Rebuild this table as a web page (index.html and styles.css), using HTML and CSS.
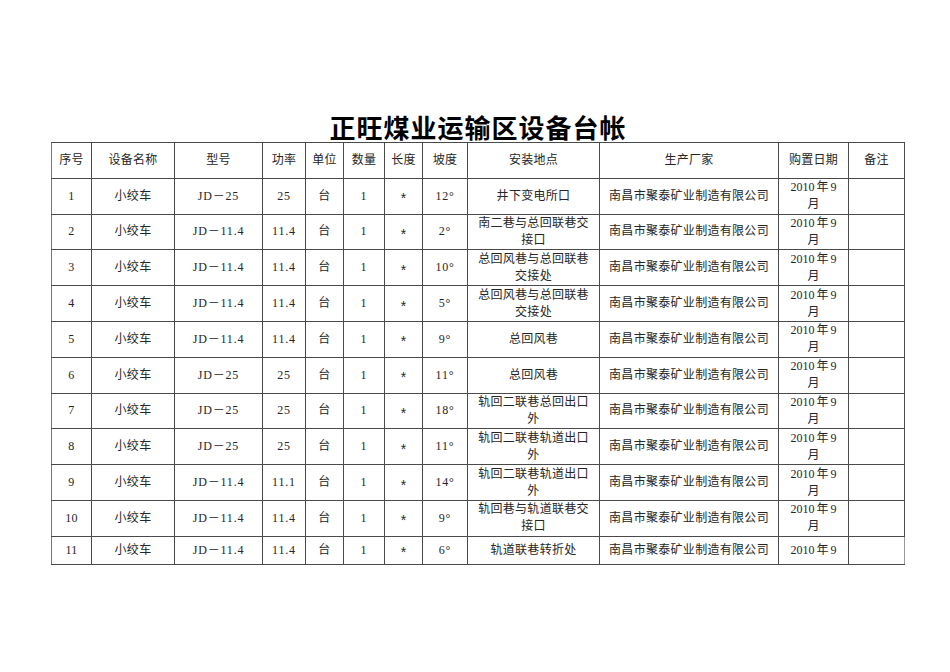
FILE: index.html
```html
<!DOCTYPE html>
<html lang="zh-CN">
<head>
<meta charset="utf-8">
<title>正旺煤业运输区设备台帐</title>
<link rel="stylesheet" href="styles.css">
</head>
<body>
<div class="page">
  <h1 class="title">正旺煤业运输区设备台帐</h1>
  <table class="ledger">
    <colgroup>
      <col class="c-no"><col class="c-name"><col class="c-model"><col class="c-power"><col class="c-unit"><col class="c-qty"><col class="c-len"><col class="c-slope"><col class="c-loc"><col class="c-maker"><col class="c-date"><col class="c-note">
    </colgroup>
    <thead>
      <tr class="row">
        <th>序号</th><th>设备名称</th><th>型号</th><th>功率</th><th class="soft">单位</th><th>数量</th><th>长度</th><th>坡度</th><th>安装地点</th><th>生产厂家</th><th>购置日期</th><th>备注</th>
      </tr>
    </thead>
    <tbody>
      <tr class="row"><td>1</td><td>小绞车</td><td class="lat">JD－25</td><td class="lat">25</td><td class="soft">台</td><td class="lat">1</td><td class="star">*</td><td class="lat">12°</td><td>井下变电所口</td><td>南昌市聚泰矿业制造有限公司</td><td class="date">2010 年 9<br>月</td><td></td></tr>
      <tr class="row"><td>2</td><td>小绞车</td><td class="lat">JD－11.4</td><td class="lat">11.4</td><td class="soft">台</td><td class="lat">1</td><td class="star">*</td><td class="lat">2°</td><td>南二巷与总回联巷交<br>接口</td><td>南昌市聚泰矿业制造有限公司</td><td class="date">2010 年 9<br>月</td><td></td></tr>
      <tr class="row"><td>3</td><td>小绞车</td><td class="lat">JD－11.4</td><td class="lat">11.4</td><td class="soft">台</td><td class="lat">1</td><td class="star">*</td><td class="lat">10°</td><td>总回风巷与总回联巷<br>交接处</td><td>南昌市聚泰矿业制造有限公司</td><td class="date">2010 年 9<br>月</td><td></td></tr>
      <tr class="row"><td>4</td><td>小绞车</td><td class="lat">JD－11.4</td><td class="lat">11.4</td><td class="soft">台</td><td class="lat">1</td><td class="star">*</td><td class="lat">5°</td><td>总回风巷与总回联巷<br>交接处</td><td>南昌市聚泰矿业制造有限公司</td><td class="date">2010 年 9<br>月</td><td></td></tr>
      <tr class="row"><td>5</td><td>小绞车</td><td class="lat">JD－11.4</td><td class="lat">11.4</td><td class="soft">台</td><td class="lat">1</td><td class="star">*</td><td class="lat">9°</td><td>总回风巷</td><td>南昌市聚泰矿业制造有限公司</td><td class="date">2010 年 9<br>月</td><td></td></tr>
      <tr class="row"><td>6</td><td>小绞车</td><td class="lat">JD－25</td><td class="lat">25</td><td class="soft">台</td><td class="lat">1</td><td class="star">*</td><td class="lat">11°</td><td>总回风巷</td><td>南昌市聚泰矿业制造有限公司</td><td class="date">2010 年 9<br>月</td><td></td></tr>
      <tr class="row"><td>7</td><td>小绞车</td><td class="lat">JD－25</td><td class="lat">25</td><td class="soft">台</td><td class="lat">1</td><td class="star">*</td><td class="lat">18°</td><td>轨回二联巷总回出口<br>外</td><td>南昌市聚泰矿业制造有限公司</td><td class="date">2010 年 9<br>月</td><td></td></tr>
      <tr class="row"><td>8</td><td>小绞车</td><td class="lat">JD－25</td><td class="lat">25</td><td class="soft">台</td><td class="lat">1</td><td class="star">*</td><td class="lat">11°</td><td>轨回二联巷轨道出口<br>外</td><td>南昌市聚泰矿业制造有限公司</td><td class="date">2010 年 9<br>月</td><td></td></tr>
      <tr class="row"><td>9</td><td>小绞车</td><td class="lat">JD－11.4</td><td class="lat">11.1</td><td class="soft">台</td><td class="lat">1</td><td class="star">*</td><td class="lat">14°</td><td>轨回二联巷轨道出口<br>外</td><td>南昌市聚泰矿业制造有限公司</td><td class="date">2010 年 9<br>月</td><td></td></tr>
      <tr class="row"><td>10</td><td>小绞车</td><td class="lat">JD－11.4</td><td class="lat">11.4</td><td class="soft">台</td><td class="lat">1</td><td class="star">*</td><td class="lat">9°</td><td>轨回巷与轨道联巷交<br>接口</td><td>南昌市聚泰矿业制造有限公司</td><td class="date">2010 年 9<br>月</td><td></td></tr>
      <tr class="row short"><td>11</td><td>小绞车</td><td class="lat">JD－11.4</td><td class="lat">11.4</td><td class="soft">台</td><td class="lat">1</td><td class="star">*</td><td class="lat">6°</td><td>轨道联巷转折处</td><td>南昌市聚泰矿业制造有限公司</td><td class="date">2010 年 9</td><td class="edge"></td></tr>
    </tbody>
  </table>
</div>
</body>
</html>
```

FILE: styles.css
```css
html, body {
  margin: 0;
  padding: 0;
  background: #ffffff;
}

.page {
  padding-top: 112px;
  padding-left: 51px;
  width: 854px;
}

.title {
  margin: 0;
  height: 30px;
  line-height: 30px;
  font-family: "Noto Sans CJK SC", "Liberation Sans", sans-serif;
  font-weight: 700;
  font-size: 26px;
  letter-spacing: 1px;
  text-align: center;
  color: #000000;
}

.ledger {
  border-collapse: collapse;
  table-layout: fixed;
  width: 854px;
  font-family: "Liberation Serif", "Noto Sans CJK SC", serif;
  font-size: 12px;
  font-weight: 400;
  color: #262626;
  letter-spacing: 0.3px;
}

.c-no { width: 40px; }
.c-name { width: 83px; }
.c-model { width: 88px; }
.c-power { width: 43px; }
.c-unit { width: 38px; }
.c-qty { width: 41px; }
.c-len { width: 38px; }
.c-slope { width: 45px; }
.c-loc { width: 132px; }
.c-maker { width: 179px; }
.c-date { width: 70px; }
.c-note { width: 56px; }

.ledger th,
.ledger td {
  border: 1px solid #4a4a4a;
  padding: 0;
  text-align: center;
  vertical-align: middle;
  line-height: 17px;
  font-weight: 400;
  overflow: hidden;
  white-space: nowrap;
}

.ledger tr > :first-child {
  border-left-color: #777777;
}

.ledger .soft {
  border-left-color: #a8a8a8;
}

.row {
  height: 35.8px;
}

.row.short {
  height: 28px;
}

.lat {
  letter-spacing: 0.8px;
}

.date {
  letter-spacing: 0;
  word-spacing: -1px;
}

.ledger .star {
  font-family: "Liberation Sans", sans-serif;
  font-size: 14px;
  padding-top: 5px;
}

.ledger .edge {
  border-right-color: #9a9a9a;
}
```
